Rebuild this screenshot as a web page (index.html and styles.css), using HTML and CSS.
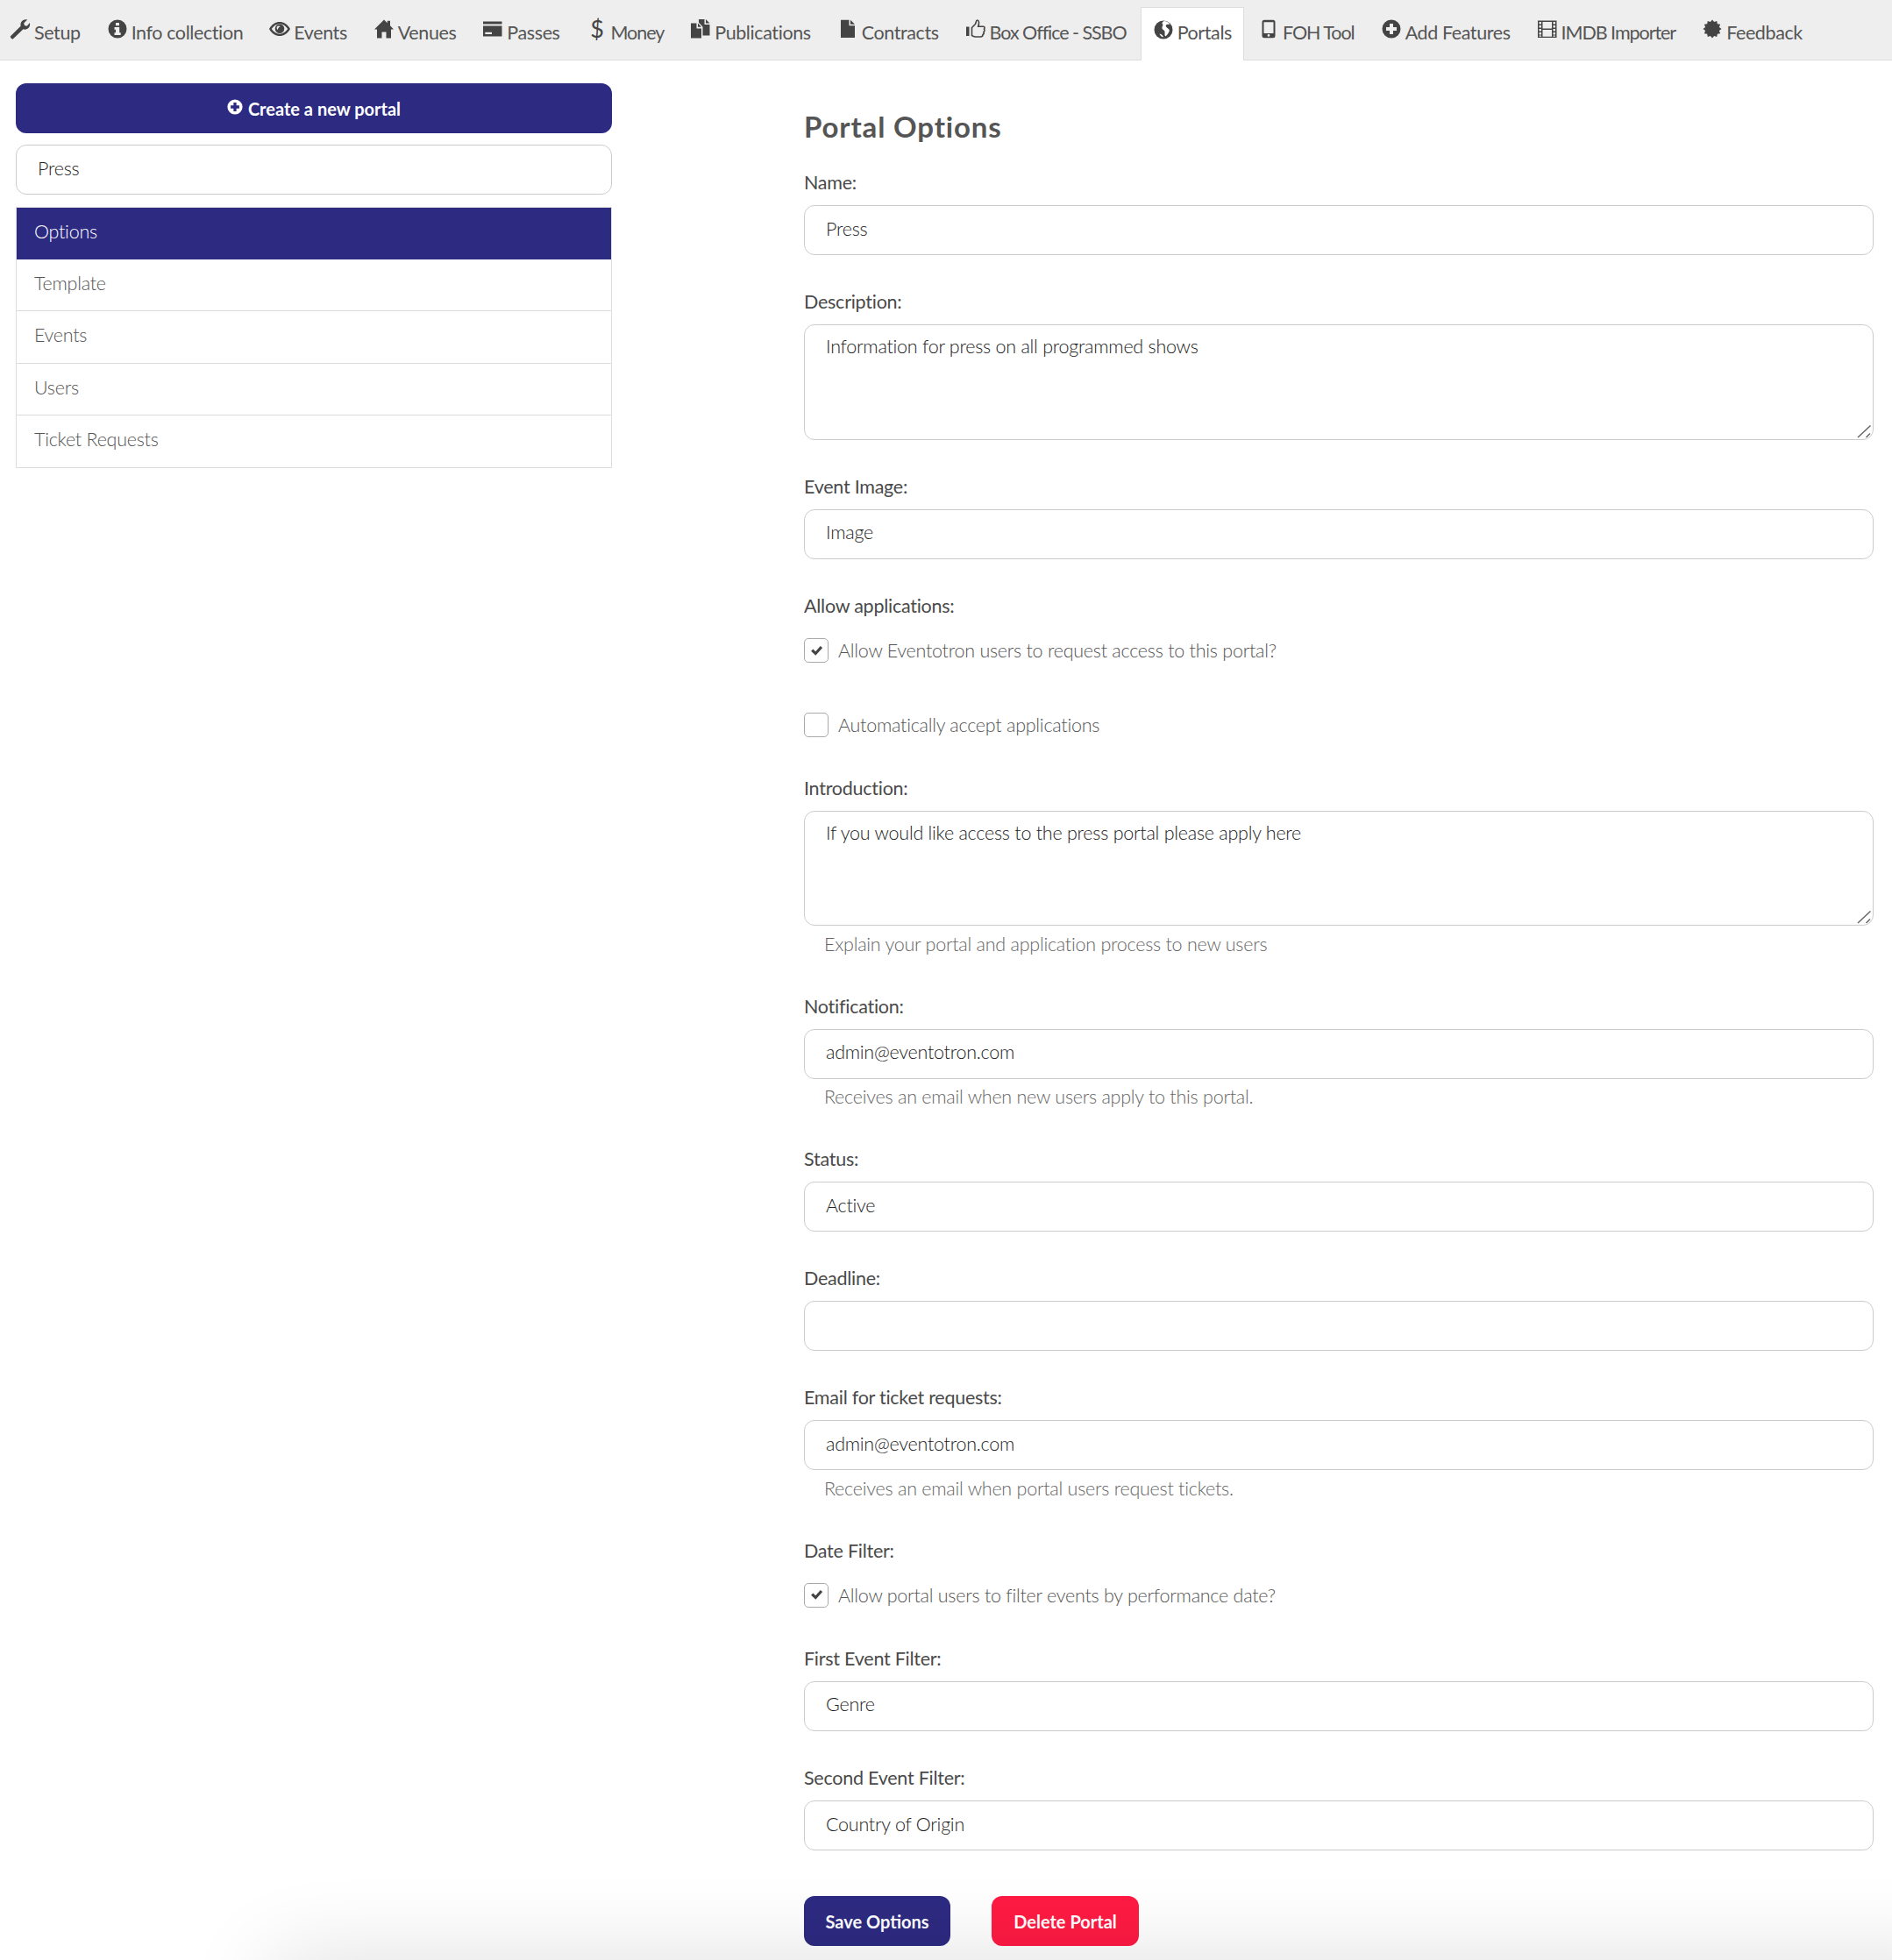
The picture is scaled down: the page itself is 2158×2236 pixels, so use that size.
FILE: index.html
```html
<!doctype html>
<html lang="en">
<head>
<meta charset="utf-8">
<title>Portal Options</title>
<link rel="stylesheet" href="styles.css">
</head>
<body>
<div class="page">
  <nav class="tabs">
    <a class="tab"><span class="ico"><svg viewBox="0 0 22 22"><path d="M0 19.3 11.6 7.7C11 5 12 2.6 14 1.3 15.6.3 17.6 0 19.2.6L15.3 4.3 15.9 7 18.700 7.700 22 4C22.500 6.500 21.800 9 19.800 10.500 18.200 11.700 16.200 12 14.500 11.200L2.800 22.500C2 22.800 1.300 22.300.6 21.500 0 20.800-.3 20 0 19.300Z"/></svg></span>Setup</a>
    <a class="tab"><span class="ico"><svg viewBox="0 0 22 22"><path fill-rule="evenodd" d="M11 .5a10.500 10.500 0 1 0 0 21 10.500 10.500 0 0 0 0-21ZM9 4h4v3.200H9ZM7.500 9h5.700v6.300h1.500V18H7.500v-2.700H9v-3.600H7.500Z"/></svg></span>Info collection</a>
    <a class="tab"><span class="ico"><svg viewBox="0 0 24 22" class="wide"><path fill-rule="evenodd" d="M0 11C3 5.500 7.500 3 12 3s9 2.500 12 8c-3 5.500-7.500 8-12 8S3 16.500 0 11Zm2.800 0c2.200 3.400 5.600 5.700 9.200 5.700s7-2.300 9.200-5.700C19 7.600 15.600 5.300 12 5.300S5 7.600 2.800 11Z"/><path fill-rule="evenodd" d="M12 5.500a5.300 5.300 0 1 1 0 10.600 5.300 5.300 0 0 1 0-10.600ZM9.800 7.700a2.400 2.400 0 0 0 0 4.200c.4-1.800 1.500-3 3-3.600a2.800 2.800 0 0 0-3-.6Z"/></svg></span>Events</a>
    <a class="tab"><span class="ico"><svg viewBox="0 0 22 22"><path d="M11 .5 14.800 4.200V1.800H18V7.300L22 11.500H19V21.500H13.500V14.500H8.500V21.500H3V11.500H0Z"/></svg></span>Venues</a>
    <a class="tab"><span class="ico"><svg viewBox="0 0 22 22"><path fill-rule="evenodd" d="M0 2.500H21.500V5.500H0ZM0 7.500H21.500V19.500H0ZM2.300 14.700V17H10V14.700Z"/></svg></span>Passes</a>
    <a class="tab tight"><span class="ico usd">$</span>Money</a>
    <a class="tab"><span class="ico"><svg viewBox="0 0 22 22"><path d="M0 4.500H6.500V10.500H12V21.500H0ZM8 4.500 12 8.800H8Z"/><path d="M9 0H15.500V6H21.500V18.500H13.500V8.500L9 3.700ZM17 0 21.500 4.500H17Z"/></svg></span>Publications</a>
    <a class="tab"><span class="ico"><svg viewBox="0 0 22 22"><path d="M3 .8H12.500V7.300H19V21H3ZM14 .8 19 5.800H14Z"/></svg></span>Contracts</a>
    <a class="tab tight"><span class="ico"><svg viewBox="0 0 22 22"><path d="M0 8.500H3.500V19H0Z"/><path class="line" d="M6.500 9.500 10.200 5.800C11.500 4.300 11 1 12.600 1 14.600 1 15.200 4 13.700 8.300H19.700C21.200 8.300 21.500 10 20.500 11 21.500 12.300 21 13.800 20 14.400 20.500 15.700 20 17 19 17.500 19 19.300 18 20 16.500 20H10.500C8.500 20 7.700 19 6.500 18.500Z"/></svg></span>Box Office - SSBO</a>
    <a class="tab active"><span class="ico"><svg viewBox="0 0 22 22"><circle cx="11" cy="11" r="10.500"/><path class="cut" d="M11.500 .9C14.500 1 17 2.500 18.500 4.500 17 5 15 4.500 14 5.500 13 6.500 14.500 8 15.500 9 17 10 18.500 11 17.500 13 16.500 15 15 17 14 18 13 19 12.500 17.500 12.500 16 12.500 14 13 12.500 11.500 11.500 10 10.500 9 9.500 9.500 8 10 6.500 11 5.500 10 4.500 9 3.500 9.500 2 11.500 .9ZM6.500 15.500C8.500 16 10.500 17.300 11 19.300 9 19.300 7.300 17.500 6.500 15.500Z"/></svg></span>Portals</a>
    <a class="tab tight"><span class="ico"><svg viewBox="0 0 22 22"><path fill-rule="evenodd" d="M6 .8H16A2.500 2.500 0 0 1 18.500 3.300V18.700A2.500 2.500 0 0 1 16 21.200H6A2.500 2.500 0 0 1 3.500 18.700V3.300A2.500 2.500 0 0 1 6 .8ZM5.500 3.200V16H16.500V3.200ZM11 17A1.400 1.400 0 1 0 11 19.800 1.400 1.400 0 0 0 11 17Z"/></svg></span>FOH Tool</a>
    <a class="tab"><span class="ico"><svg viewBox="0 0 22 22"><use href="#plus"/></svg></span>Add Features</a>
    <a class="tab tight"><span class="ico"><svg viewBox="0 0 22 22"><path fill-rule="evenodd" d="M0 1.500H21.500V21H0ZM1.500 3V5.500H4V3ZM1.500 7V9.500H4V7ZM1.500 11V13.500H4V11ZM1.500 15V17.500H4V15ZM1.500 18.500V19.700H4V18.500ZM17.500 3V5.500H20V3ZM17.500 7V9.500H20V7ZM17.500 11V13.500H20V11ZM17.500 15V17.500H20V15ZM17.500 18.500V19.700H20V18.500ZM5.500 3V10.500H16V3ZM5.500 12V19.700H16V12Z"/></svg></span>IMDB Importer</a>
    <a class="tab"><span class="ico"><svg viewBox="0 0 22 22"><polygon points="21.500,11 18.920,13.120 20.090,16.250 16.800,16.800 16.250,20.090 13.120,18.920 11,21.500 8.880,18.920 5.750,20.090 5.200,16.800 1.910,16.250 3.080,13.120 .5,11 3.080,8.880 1.910,5.750 5.200,5.200 5.750,1.910 8.880,3.080 11,.5 13.120,3.080 16.250,1.910 16.800,5.200 20.090,5.750 18.920,8.880"/></svg></span>Feedback</a>
  </nav>

  <main class="layout">
    <aside class="side">
      <button class="btn btn-create" type="button"><svg class="btn-ico" viewBox="0 0 22 22"><use href="#plus"/></svg>Create a new portal</button>
      <select class="control side-select"><option>Press</option></select>
      <ul class="list">
        <li class="list-item current">Options</li>
        <li class="list-item">Template</li>
        <li class="list-item">Events</li>
        <li class="list-item">Users</li>
        <li class="list-item">Ticket Requests</li>
      </ul>
    </aside>

    <form class="form">
      <h2 class="title">Portal Options</h2>

      <div class="group">
        <label class="label">Name:</label>
        <input class="control" type="text" value="Press">
      </div>
      <div class="group">
        <label class="label">Description:</label>
        <div class="area-wrap">
          <textarea class="control area">Information for press on all programmed shows</textarea>
          <svg class="grip" viewBox="0 0 18 18"><path d="M1 16 15.500 2.500M10.500 16 15 11.500"/></svg>
        </div>
      </div>
      <div class="group">
        <label class="label">Event Image:</label>
        <select class="control"><option>Image</option></select>
      </div>
      <div class="group">
        <label class="label">Allow applications:</label>
        <div class="checks">
          <div class="check"><span class="box"><svg viewBox="0 0 14 14"><use href="#tick"/></svg></span>Allow Eventotron users to request access to this portal?</div>
          <div class="check"><span class="box"></span>Automatically accept applications</div>
        </div>
      </div>
      <div class="group has-help">
        <label class="label">Introduction:</label>
        <div class="area-wrap">
          <textarea class="control area">If you would like access to the press portal please apply here</textarea>
          <svg class="grip" viewBox="0 0 18 18"><path d="M1 16 15.500 2.500M10.500 16 15 11.500"/></svg>
        </div>
        <p class="help">Explain your portal and application process to new users</p>
      </div>
      <div class="group has-help">
        <label class="label">Notification:</label>
        <input class="control" type="text" value="admin@eventotron.com">
        <p class="help">Receives an email when new users apply to this portal.</p>
      </div>
      <div class="group">
        <label class="label">Status:</label>
        <select class="control"><option>Active</option></select>
      </div>
      <div class="group">
        <label class="label">Deadline:</label>
        <input class="control" type="text" value="">
      </div>
      <div class="group has-help">
        <label class="label">Email for ticket requests:</label>
        <input class="control" type="text" value="admin@eventotron.com">
        <p class="help">Receives an email when portal users request tickets.</p>
      </div>
      <div class="group">
        <label class="label">Date Filter:</label>
        <div class="checks">
          <div class="check"><span class="box"><svg viewBox="0 0 14 14"><use href="#tick"/></svg></span>Allow portal users to filter events by performance date?</div>
        </div>
      </div>
      <div class="group">
        <label class="label">First Event Filter:</label>
        <select class="control"><option>Genre</option></select>
      </div>
      <div class="group">
        <label class="label">Second Event Filter:</label>
        <select class="control"><option>Country of Origin</option></select>
      </div>
      <div class="actions">
        <button class="btn btn-save" type="button">Save Options</button>
        <button class="btn btn-delete" type="button">Delete Portal</button>
      </div>
    </form>
  </main>
  <div class="glow"></div>
</div>
<svg class="defs" aria-hidden="true">
  <symbol id="plus" viewBox="0 0 22 22"><path fill-rule="evenodd" d="M11 .5a10.500 10.500 0 1 0 0 21 10.500 10.500 0 0 0 0-21ZM9 5h4v4h4v4h-4v4H9v-4H5V9h4Z"/></symbol>
  <symbol id="tick" viewBox="0 0 14 14"><path d="M1 7.300 3.200 5.100 5.800 7.700 11 1.800 13.200 3.800 5.900 12Z"/></symbol>
</svg>
</body>
</html>
```
FILE: styles.css
```css
* { box-sizing: border-box; }
html, body { margin: 0; padding: 0; }
body {
  font-family: "Lato", "Open Sans", sans-serif;
  font-size: 21.5px;
  font-weight: 300;
  letter-spacing: -.25px;
  line-height: 30px;
  color: #444;
  background: #fff;
}
.page { position: relative; height: 2236px; overflow: hidden; }
.defs { display: none; }

/* top tabs */
.tabs {
  display: flex;
  height: 69px;
  padding-top: 8px;
  background: #eee;
  border-bottom: 1px solid #ddd;
  font-weight: 400;
  letter-spacing: -.4px;
  color: #555;
}
.tab {
  display: flex;
  align-items: center;
  height: 61px;
  padding: 0 14px 4px 15px;
  margin-right: 2px;
  white-space: nowrap;
}
.tab:first-child { padding-left: 12px; }
.tab.tight { letter-spacing: -1.05px; }
.tab.active {
  background: #fff;
  border: 1px solid #ddd;
  border-bottom: 0;
  padding-left: 14px;
  padding-right: 13px;
}
.ico {
  display: flex;
  justify-content: center;
  align-items: center;
  flex: none;
  width: 22px;
  height: 22px;
  margin-right: 5px;
  margin-top: -7px;
  color: #444;
}
.ico svg { display: block; width: 22px; height: 22px; fill: currentColor; overflow: visible; }
.ico svg.wide { width: 24px; }
.ico .line { fill: none; stroke: currentColor; stroke-width: 1.6; }
.ico .cut { fill: #fff; }
.usd { font-size: 27px; }

/* page columns */
.layout {
  display: flex;
  justify-content: space-between;
  padding: 26px 21px 0 18px;
}
.side { width: 680px; }
.form { width: 1220px; }

/* buttons */
.btn {
  display: inline-flex;
  align-items: center;
  justify-content: center;
  height: 57px;
  border: 0;
  border-radius: 12px;
  font: inherit;
  font-size: 20px;
  font-weight: 700;
  letter-spacing: 0;
  color: #fff;
}
.btn-create { width: 100%; background: #2d2a82; }
.btn-ico { width: 18px; height: 18px; margin: -3px 6px 0 0; fill: currentColor; }
.btn-save { width: 167px; background: #2d2a82; }
.btn-delete { width: 168px; background: #ff1a43; }

/* form controls */
.control {
  display: block;
  width: 100%;
  height: 57px;
  padding: 0 24px 4px;
  border: 1px solid #ccc;
  border-radius: 12px;
  background: #fff;
  font: inherit;
  letter-spacing: inherit;
  color: #222;
  outline: 0;
  appearance: none;
}
.area { height: 131.500px; padding: 9px 24px; resize: none; }
.area-wrap { position: relative; }
.grip {
  position: absolute;
  right: 1px;
  bottom: 1px;
  width: 18px;
  height: 18px;
  fill: none;
  stroke: #666;
  stroke-width: 1.500;
}
.side-select { margin: 13px 0 14px; }

/* left menu */
.list { margin: 0; padding: 0; list-style: none; border: 1px solid #ddd; }
.list-item {
  display: flex;
  align-items: center;
  height: 59.200px;
  padding: 0 20px 4px;
  border-bottom: 1px solid #ddd;
  color: #555;
}
.list-item:last-child { border-bottom: 0; }
.list-item.current { background: #2d2a82; color: #fff; border-bottom-color: #2d2a82; }

/* form */
.title {
  margin: 26px 0;
  font-size: 33px;
  line-height: 46px;
  font-weight: 700;
  letter-spacing: .85px;
  color: #555;
}
.group { margin-bottom: 38.200px; }
.group.has-help { margin-bottom: 40.900px; }
.label {
  display: block;
  height: 30px;
  margin-bottom: 11px;
  font-weight: 400;
  color: #4a4a4a;
}
.checks { padding-top: 6px; }
.check {
  display: flex;
  align-items: center;
  height: 38px;
  color: #555;
}
.check + .check { margin-top: 46.500px; }
.box {
  display: flex;
  align-items: center;
  justify-content: center;
  flex: none;
  width: 28px;
  height: 28px;
  margin-right: 11px;
  border: 1px solid #aaa;
  border-radius: 5px;
}
.box svg { width: 15px; height: 15px; fill: #444; }
.help { height: 30px; margin: 5.500px 0 0 23px; color: #666; }
.actions { display: flex; gap: 47px; margin-top: 52px; }

/* soft shade rising from the bottom edge */
.glow {
  position: absolute;
  left: 310px;
  right: -100px;
  bottom: -80px;
  height: 80px;
  box-shadow: 0 0 100px rgba(0, 0, 0, .14);
  background: #eee;
  pointer-events: none;
}
```
